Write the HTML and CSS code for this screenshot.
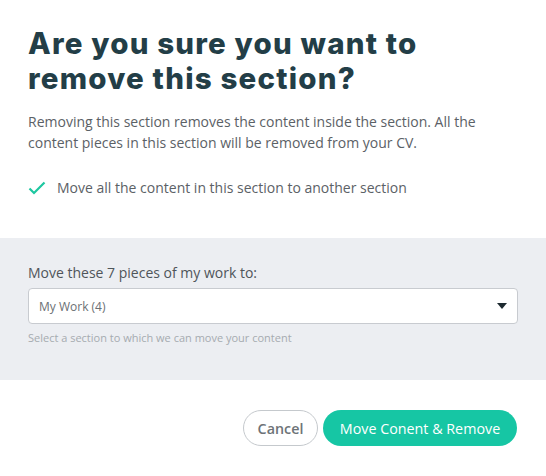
FILE: index.html
```html
<!DOCTYPE html>
<html>
<head>
<meta charset="utf-8">
<link rel="stylesheet" href="styles.css">
</head>
<body>
<div class="modal">
  <div class="top">
    <h1 class="title">Are you sure you want to remove this section?</h1>
    <p class="desc">Removing this section removes the content inside the section. All the content pieces in this section will be removed from your CV.</p>
    <div class="check-row">
      <svg class="check" width="18" height="14" viewBox="0 0 18 14"><path d="M1.5 7.5 L6 12 L16.5 1.5" fill="none" stroke="#1ec7a0" stroke-width="2.2"/></svg>
      <span>Move all the content in this section to another section</span>
    </div>
  </div>
  <div class="panel">
    <div class="label">Move these 7 pieces of my work to:</div>
    <div class="select">
      <span>My Work (4)</span>
      <svg width="10" height="6" viewBox="0 0 10 6"><path d="M0 0 H10 L5 6 Z" fill="#1d2a30"/></svg>
    </div>
    <div class="hint">Select a section to which we can move your content</div>
  </div>
  <div class="actions">
    <button class="btn btn-cancel">Cancel</button>
    <button class="btn btn-primary">Move Conent &amp; Remove</button>
  </div>
</div>
</body>
</html>
```
FILE: styles.css
```css
* { box-sizing: border-box; }
html, body { margin: 0; padding: 0; background: #fff; }
body { font-family: "Open Sans", "Liberation Sans", sans-serif; width: 546px; }
.top { padding: 26px 28px 0 28px; height: 238px; }
.title {
  margin: 0;
  max-width: 430px;
  font-family: "Inter", "Lato", sans-serif;
  font-weight: 800;
  font-size: 29.5px;
  line-height: 35px;
  color: #233e47;
  letter-spacing: 1.2px;
}
.desc {
  margin: 15px 0 0 0;
  font-size: 14px;
  line-height: 21px;
  color: #5b6166;
}
.check-row {
  margin-top: 25px;
  display: flex;
  align-items: center;
  gap: 11px;
  font-size: 14px;
  color: #5b6166;
}
.check { flex: none; }
.panel {
  background: #eceef2;
  height: 142px;
  padding: 25px 28px 0 28px;
}
.label { font-size: 14px; color: #4f555a; line-height: 20px; }
.select {
  margin-top: 5px;
  height: 36px;
  background: #fff;
  border: 1px solid #c8cbd0;
  border-radius: 4px;
  display: flex;
  align-items: center;
  justify-content: space-between;
  padding: 0 10px 0 10px;
  font-size: 12px;
  color: #6b7074;
}
.hint { margin-top: 6px; font-size: 11px; color: #a6abb0; }
.actions {
  display: flex;
  justify-content: flex-end;
  gap: 5px;
  padding: 30px 29px 0 0;
}
.btn {
  height: 36px;
  border-radius: 18px;
  font-family: "Open Sans", "Liberation Sans", sans-serif;
  font-size: 14.3px;
  font-weight: 600;
  cursor: pointer;
}
.btn-cancel {
  width: 75px;
  background: #fff;
  border: 1px solid #c5c9cd;
  color: #6d7377;
}
.btn-primary {
  width: 194px;
  background: #16c6a4;
  border: none;
  color: #fff;
  font-weight: 500;
}
```
